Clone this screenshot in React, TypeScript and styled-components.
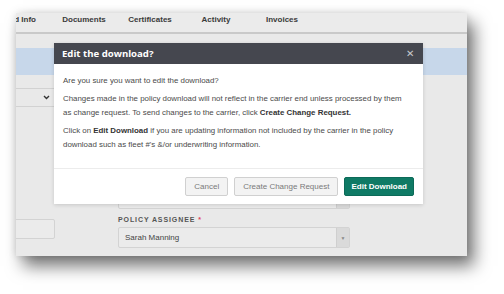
import React from "react";
import styled, { createGlobalStyle } from "styled-components";

const Global = createGlobalStyle`
  html, body { margin: 0; padding: 0; background: #ffffff; }
  body { font-family: "Liberation Sans", Arial, sans-serif; width: 504px; height: 294px; overflow: hidden; }
  * { box-sizing: border-box; }
`;

const Page = styled.div`
  padding: 13px 0 0 16px;
`;

const Panel = styled.div`
  position: relative;
  width: 451px;
  height: 243px;
  background: #e9e9e9;
  overflow: hidden;
  box-shadow: 7px 10px 16px rgba(0, 0, 0, 0.55), 0 0 8px rgba(0, 0, 0, 0.12);
`;

const TabBar = styled.div`
  display: flex;
  height: 21px;
  background: #ebebeb;
  border-bottom: 2px solid #c9c9c9;
  margin-left: -31px;
`;

const Tab = styled.div<{ $first?: boolean }>`
  width: 66px;
  flex: none;
  display: flex;
  justify-content: ${(p) => (p.$first ? "flex-end" : "center")};
  padding: 1px ${(p) => (p.$first ? "15px" : "0")} 0 0;
  font-size: 8px;
  line-height: 12px;
  font-weight: bold;
  color: #3a3a3a;
  white-space: nowrap;
`;

const Spacer = styled.div`
  height: 14px;
`;

const InfoBand = styled.div`
  height: 27px;
  background: #c7d7ea;
`;

const FormGrid = styled.div`
  display: grid;
  grid-template-columns: 40px 232px;
  column-gap: 62px;
`;

const LeftCol = styled.div`
  display: flex;
  flex-direction: column;
`;

const MidCol = styled.div`
  display: flex;
  flex-direction: column;
`;

const Select = styled.div`
  margin-top: 13px;
  width: 60px;
  height: 19px;
  border-top: 1px solid #d2d2d2;
  border-bottom: 1px solid #d2d2d2;
  display: flex;
  align-items: center;
  padding-left: 27px;
`;

const LeftInput = styled.div`
  margin-top: 112px;
  margin-left: -12px;
  width: 51px;
  height: 20px;
  border: 1px solid #d3d3d3;
  border-radius: 2px;
  background: #ebebeb;
`;

const Field = styled.div<{ $top: number }>`
  margin-top: ${(p) => p.$top}px;
  height: 21px;
  display: flex;
  border: 1px solid #d3d3d3;
  border-radius: 2px;
  background: #ebebeb;
  font-size: 8px;
  color: #444;
`;

const FieldText = styled.div`
  flex: 1;
  display: flex;
  align-items: center;
  padding-left: 6px;
`;

const FieldButton = styled.div`
  width: 13px;
  flex: none;
  background: #dadada;
  border-left: 1px solid #cfcfcf;
  display: flex;
  align-items: center;
  justify-content: center;
  font-size: 5px;
  color: #888;
`;

const Label = styled.div`
  margin-top: 6px;
  font-size: 7px;
  line-height: 10px;
  font-weight: bold;
  letter-spacing: 0.9px;
  color: #555;
`;

const Req = styled.span`
  color: #e0405a;
`;

const Modal = styled.div`
  position: absolute;
  left: 38px;
  top: 30px;
  width: 369px;
  background: #ffffff;
  box-shadow: 0 1px 4px rgba(0, 0, 0, 0.15);
`;

const ModalHeader = styled.div`
  height: 21px;
  background: #45474f;
  display: flex;
  align-items: center;
  justify-content: space-between;
  padding: 0 9px 0 8px;
`;

const Title = styled.div`
  font-family: "Open Sans", "Liberation Sans", sans-serif;
  font-weight: bold;
  font-size: 9.6px;
  color: #ffffff;
`;

const Close = styled.div`
  font-size: 10px;
  color: #c8c8cc;
  line-height: 1;
`;

const ModalBody = styled.div`
  padding: 10px 16px 16px 9px;
  font-size: 7.9px;
  line-height: 14px;
  color: #4a4a4a;
  border-bottom: 1px solid #ececec;
`;

const Para = styled.p`
  margin: 0 0 4px 0;
  &:last-child { margin-bottom: 0; }
`;

const Strong = styled.b`
  color: #333;
`;

const Footer = styled.div`
  display: flex;
  justify-content: flex-end;
  gap: 6px;
  padding: 8px 9px 8px 0;
`;

const Button = styled.button<{ $primary?: boolean }>`
  height: 19px;
  padding: 0 ${(p) => (p.$primary ? "6px" : "8px")};
  font-family: "Liberation Sans", Arial, sans-serif;
  font-size: 8px;
  font-weight: ${(p) => (p.$primary ? "bold" : "normal")};
  color: ${(p) => (p.$primary ? "#ffffff" : "#7a7a7a")};
  background: ${(p) => (p.$primary ? "#0f7a65" : "#f3f3f3")};
  border: 1px solid ${(p) => (p.$primary ? "#0c6a58" : "#d0d0d0")};
  border-radius: 2px;
`;

const Chevron = () => (
  <svg width="7" height="5" viewBox="0 0 7 5">
    <polyline points="1,1 3.5,3.5 6,1" fill="none" stroke="#333" strokeWidth="1.4" />
  </svg>
);

export default function App() {
  return (
    <>
      <Global />
      <Page>
        <Panel>
          <TabBar>
            <Tab $first>Insured Info</Tab>
            <Tab>Documents</Tab>
            <Tab>Certificates</Tab>
            <Tab>Activity</Tab>
            <Tab>Invoices</Tab>
          </TabBar>
          <Spacer />
          <InfoBand />
          <FormGrid>
            <LeftCol>
              <Select>
                <Chevron />
              </Select>
              <LeftInput />
            </LeftCol>
            <MidCol>
              <Field $top={113}>
                <FieldText />
                <FieldButton />
              </Field>
              <Label>
                POLICY ASSIGNEE <Req>*</Req>
              </Label>
              <Field $top={2}>
                <FieldText>Sarah Manning</FieldText>
                <FieldButton>▼</FieldButton>
              </Field>
            </MidCol>
          </FormGrid>
          <Modal>
            <ModalHeader>
              <Title>Edit the download?</Title>
              <Close>✕</Close>
            </ModalHeader>
            <ModalBody>
              <Para>Are you sure you want to edit the download?</Para>
              <Para>
                Changes made in the policy download will not reflect in the carrier end unless processed by them
                as change request. To send changes to the carrier, click <Strong>Create Change Request.</Strong>
              </Para>
              <Para>
                Click on <Strong>Edit Download</Strong> if you are updating information not included by the carrier in
                the policy download such as fleet #'s &amp;/or underwriting information.
              </Para>
            </ModalBody>
            <Footer>
              <Button>Cancel</Button>
              <Button>Create Change Request</Button>
              <Button $primary>Edit Download</Button>
            </Footer>
          </Modal>
        </Panel>
      </Page>
    </>
  );
}
